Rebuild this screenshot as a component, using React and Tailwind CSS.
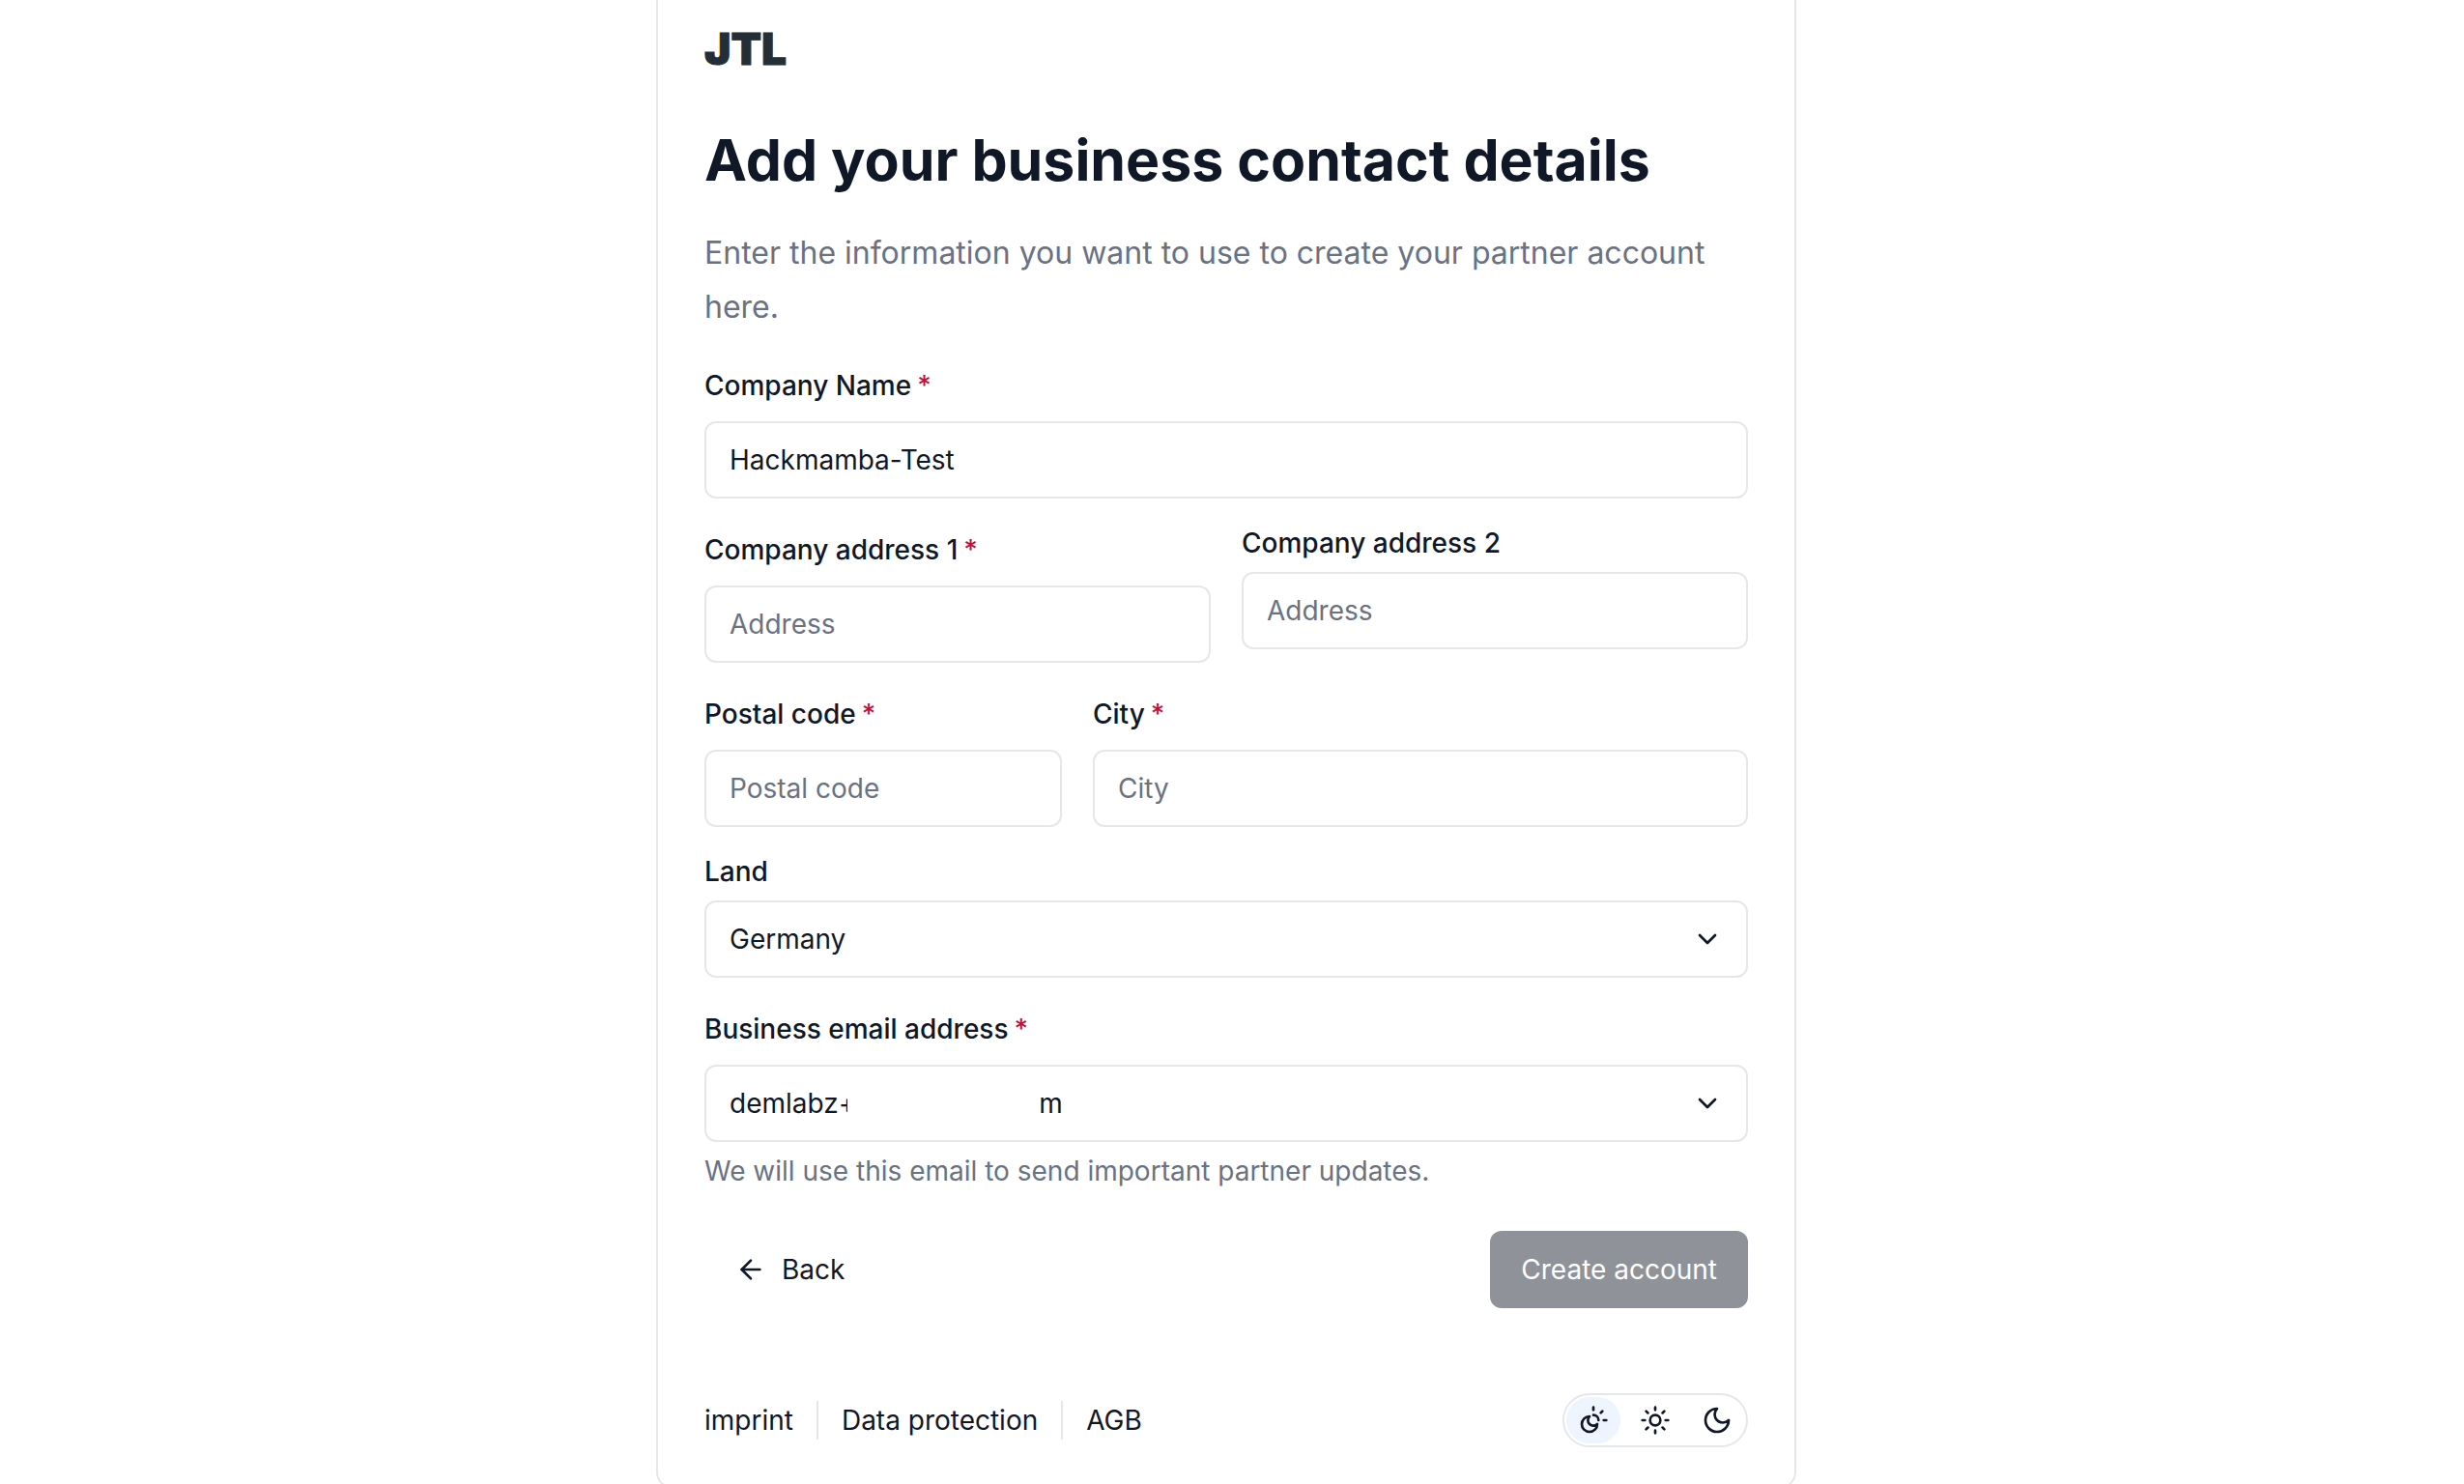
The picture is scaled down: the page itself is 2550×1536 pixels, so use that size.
import React, { useState } from "react";
import { ArrowLeft, ChevronDown } from "lucide-react";

const inputClass =
  "h-20 w-full rounded-xl border-2 border-gray-200 bg-white px-6 text-[28px] text-gray-900 placeholder:text-gray-500 outline-none";

// the middle of the address stays hidden
const maskedEmail = "demlabz+" + "\u00a0".repeat(24) + "m";

function Field({ id, label, required, hint, children }) {
  return (
    <div className="flex flex-col gap-4">
      <div className={required ? "flex h-[42px] items-center gap-1.5" : "flex h-7 items-center"}>
        <label htmlFor={id} className="text-[28px] leading-7 font-medium">{label}</label>
        {required && <span className="text-[28px] leading-7 font-medium text-[#be123c]">*</span>}
      </div>
      {children}
      {hint && <p className="text-[28px] leading-7 text-gray-500">{hint}</p>}
    </div>
  );
}

function Select({ id, value, onChange, options, masked }) {
  return (
    <div className="relative">
      <select id={id} value={value} onChange={onChange} className={`${inputClass} appearance-none`}>
        {options.map((o) => (
          <option key={o} value={o}>{o}</option>
        ))}
      </select>
      {masked && <span className="pointer-events-none absolute top-5 left-[148px] h-10 w-48 bg-white" />}
      <ChevronDown size={32} className="pointer-events-none absolute top-6 right-[26px]" />
    </div>
  );
}

function ThemeIcon({ name }) {
  return (
    <svg width="32" height="32" viewBox="0 0 24 24" fill="none" stroke="currentColor" strokeWidth="2" strokeLinecap="round" strokeLinejoin="round">
      {name === "system" && (
        <>
          <path d="M12 2v2" />
          <path d="M12 8a4 4 0 0 1 4 4" />
          <path d="m19 5-1.256 1.256" />
          <path d="M20 12h2" />
          <path d="M9 9a4 4 0 0 0 6 6 6 6 0 1 1-6-6Z" />
        </>
      )}
      {name === "light" && (
        <>
          <circle cx="12" cy="12" r="4" />
          <path d="M12 2v2M12 20v2M4.93 4.93l1.41 1.41M17.66 17.66l1.41 1.41M2 12h2M20 12h2M6.34 17.66l-1.41 1.41M19.07 4.93l-1.41 1.41" />
        </>
      )}
      {name === "dark" && <path d="M12 3a6 6 0 0 0 9 9 9 9 0 1 1-9-9Z" />}
    </svg>
  );
}

export default function App() {
  const [company, setCompany] = useState("Hackmamba-Test");
  const [country, setCountry] = useState("Germany");
  const [email, setEmail] = useState(maskedEmail);
  const [theme, setTheme] = useState("system");

  return (
    <main className="flex h-screen items-start justify-center overflow-hidden bg-white pr-3 font-['Inter',sans-serif] text-gray-900">
      <div className="w-full max-w-[1180px] rounded-b-2xl border-2 border-t-0 border-gray-200 px-12 pt-6 pb-10">
        <div className="text-[46px] leading-[52px] font-black text-[#242e36] [-webkit-text-stroke:1px_#242e36]">JTL</div>

        <h1 className="mt-[54px] text-[59px] leading-[72px] font-bold">Add your business contact details</h1>
        <p className="mt-8 text-[32px] leading-14 text-gray-500">
          Enter the information you want to use to create your partner account here.
        </p>

        <form className="mt-8 flex flex-col gap-8" onSubmit={(e) => e.preventDefault()}>
          <Field id="company" label="Company Name" required>
            <input id="company" type="text" className={inputClass} value={company} onChange={(e) => setCompany(e.target.value)} />
          </Field>

          <div className="grid grid-cols-2 gap-8">
            <Field id="address1" label="Company address 1" required>
              <input id="address1" type="text" placeholder="Address" className={inputClass} />
            </Field>
            <Field id="address2" label="Company address 2">
              <input id="address2" type="text" placeholder="Address" className={inputClass} />
            </Field>
          </div>

          <div className="grid grid-cols-[370fr_678fr] gap-8">
            <Field id="postal" label="Postal code" required>
              <input id="postal" type="text" placeholder="Postal code" className={inputClass} />
            </Field>
            <Field id="city" label="City" required>
              <input id="city" type="text" placeholder="City" className={inputClass} />
            </Field>
          </div>

          <Field id="country" label="Land">
            <Select id="country" value={country} onChange={(e) => setCountry(e.target.value)} options={["Germany"]} />
          </Field>

          <Field id="email" label="Business email address" required hint="We will use this email to send important partner updates.">
            <Select id="email" value={email} onChange={(e) => setEmail(e.target.value)} options={[maskedEmail]} masked />
          </Field>

          <div className="mt-4 flex items-center justify-between">
            <button type="button" className="flex h-20 items-center gap-4 px-8 text-[28px]">
              <ArrowLeft size={32} />
              Back
            </button>
            <button type="submit" disabled className="h-20 rounded-xl bg-[#8f9399] px-8 text-[28px] text-white">
              Create account
            </button>
          </div>
        </form>

        <footer className="mt-[88px] flex items-center justify-between">
          <nav className="flex items-center gap-6 text-[28px] leading-10">
            <a href="#imprint">imprint</a>
            <span className="h-10 w-0.5 bg-gray-200" />
            <a href="#privacy">Data protection</a>
            <span className="h-10 w-0.5 bg-gray-200" />
            <a href="#agb">AGB</a>
          </nav>
          <div className="flex gap-2 rounded-full border-2 border-gray-200 p-0.5">
            {["system", "light", "dark"].map((name) => (
              <button
                key={name}
                type="button"
                aria-label={name}
                onClick={() => setTheme(name)}
                className={`flex h-12 w-14 items-center justify-center rounded-full ${theme === name ? "bg-[#eef5ff]" : ""}`}
              >
                <ThemeIcon name={name} />
              </button>
            ))}
          </div>
        </footer>
      </div>
    </main>
  );
}
